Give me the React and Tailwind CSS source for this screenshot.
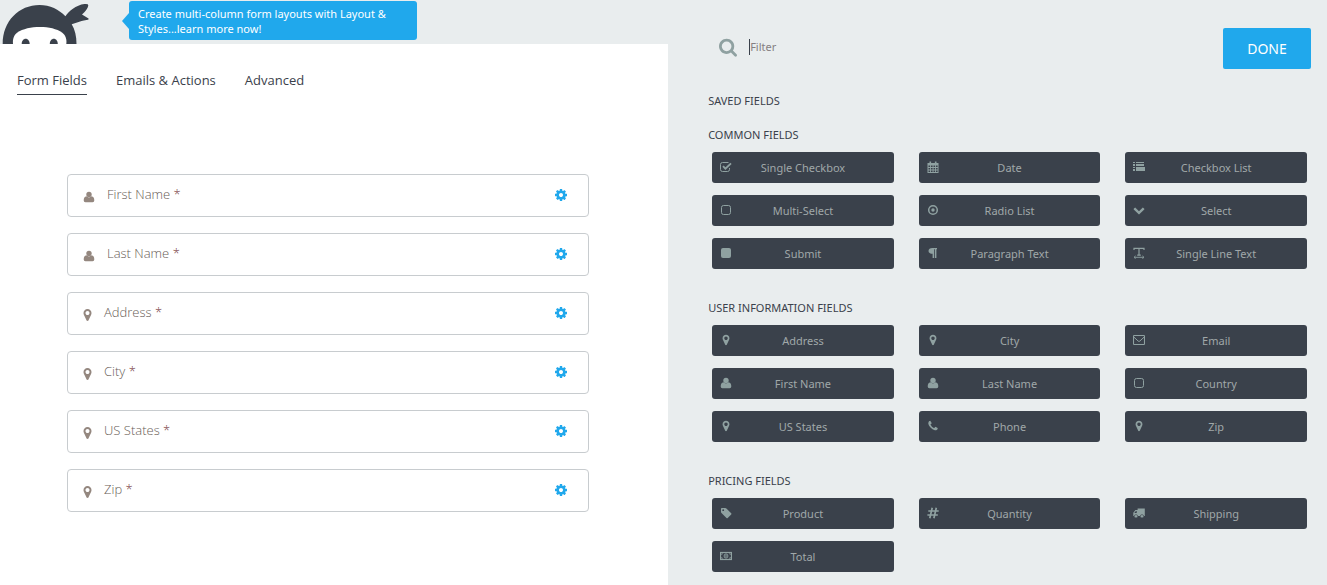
import React from "react";

// Glyphs drawn on a 1792-unit em square, baseline at y = 0, y axis pointing up.
const GLYPHS = {
  marker: { w: 1024, d: "M768 896q0 106 -75 181t-181 75t-181 -75t-75 -181t75 -181t181 -75t181 75t75 181zM1024 896q0 -109 -33 -179l-364 -774q-16 -33 -47.5 -52t-67.5 -19t-67.5 19t-46.5 52l-365 774q-33 70 -33 179q0 212 150 362t362 150t362 -150t150 -362z" },
  cog: { w: 1536, d: "M1024 640q0 106 -75 181t-181 75t-181 -75t-75 -181t75 -181t181 -75t181 75t75 181zM1536 749v-222q0 -12 -8 -23t-20 -13l-185 -28q-19 -54 -39 -91q35 -50 107 -138q10 -12 10 -25t-9 -23q-27 -37 -99 -108t-94 -71q-12 0 -26 9l-138 108q-44 -23 -91 -38q-16 -136 -29 -186q-7 -28 -36 -28h-222q-14 0 -24.5 8.5t-11.5 21.5l-28 184q-49 16 -90 37l-141 -107q-10 -9 -25 -9q-14 0 -25 11q-126 114 -165 168q-7 10 -7 23q0 12 8 23q15 21 51 66.5t54 70.5q-27 50 -41 99l-183 27q-13 2 -21 12.5t-8 23.5v222q0 12 8 23t19 13l186 28q14 46 39 92q-40 57 -107 138q-10 12 -10 24q0 10 9 23q26 36 98.5 107.5t94.5 71.5q13 0 26 -10l138 -107q44 23 91 38q16 136 29 186q7 28 36 28h222q14 0 24.5 -8.5t11.5 -21.5l28 -184q49 -16 90 -37l142 107q9 9 24 9q13 0 25 -10q129 -119 165 -170q7 -8 7 -22q0 -12 -8 -23q-15 -21 -51 -66.5t-54 -70.5q26 -50 41 -98l183 -28q13 -2 21 -12.5t8 -23.5z" },
  search: { w: 1664, d: "M1152 704q0 185 -131.5 316.5t-316.5 131.5t-316.5 -131.5t-131.5 -316.5t131.5 -316.5t316.5 -131.5t316.5 131.5t131.5 316.5zM1664 -128q0 -52 -38 -90t-90 -38q-54 0 -90 38l-343 342q-179 -124 -399 -124q-143 0 -273.5 55.5t-225 150t-150 225t-55.5 273.5t55.5 273.5t150 225t225 150t273.5 55.5t273.5 -55.5t225 -150t150 -225t55.5 -273.5q0 -220 -124 -399l343 -343q37 -37 37 -90z" },
  chevron: { w: 1792, d: "M1683 728l-742 -741q-19 -19 -45 -19t-45 19l-742 741q-19 19 -19 45.5t19 45.5l166 165q19 19 45 19t45 -19l531 -531l531 531q19 19 45 19t45 -19l166 -165q19 -19 19 -45.5t-19 -45.5z" },
  phone: { w: 1408, d: "M1408 296q0 -27 -10 -70.5t-21 -68.5q-21 -50 -122 -106q-94 -51 -186 -51q-27 0 -53 3.5t-57.5 12.5t-47 14.5t-55.5 20.5t-49 18q-98 35 -175 83q-127 79 -264 216t-216 264q-48 77 -83 175q-3 9 -18 49t-20.5 55.5t-14.5 47t-12.5 57.5t-3.5 53q0 92 51 186q56 101 106 122q25 11 68.5 21t70.5 10q14 0 21 -3q18 -6 53 -76q11 -19 30 -54t35 -63.5t31 -53.5q3 -4 17.5 -25t21.5 -35.5t7 -28.5q0 -20 -28.5 -50t-62 -55t-62 -53t-28.5 -46q0 -9 5 -22.5t8.5 -20.5t14 -24t11.5 -19q76 -137 174 -235t235 -174q2 -1 19 -11.5t24 -14t20.5 -8.5t22.5 -5q18 0 46 28.5t53 62t55 62t50 28.5q14 0 28.5 -7t35.5 -21.5t25 -17.5q25 -15 53.5 -31t63.5 -35t54 -30q70 -35 76 -53q3 -7 3 -21z" },
};

// Small icons drawn on a 12 x 12 grid.
const SHAPES = {
  user: (
    <g fill="currentColor">
      <circle cx="6" cy="3.500" r="2.700" />
      <path d="M3.400 5.300q2.600 2.200 5.200 0 2.700.4 2.700 4.200 0 1.800-1.700 1.800H2.400Q.7 11.300.7 9.500q0-3.800 2.700-4.200z" />
    </g>
  ),
  checkSquare: (
    <g fill="none" stroke="currentColor">
      <path d="M9.500 7v1.500a2 2 0 0 1-2 2h-5a2 2 0 0 1-2-2v-5a2 2 0 0 1 2-2h6" />
      <path d="M3 5.200l2.400 2.400L11 2.400" strokeWidth="1.900" />
    </g>
  ),
  squareOutline: <rect x="1.500" y="1.500" width="9" height="9" rx="2" fill="none" stroke="currentColor" />,
  square: <rect x="1" y="1" width="10" height="10" rx="2" fill="currentColor" />,
  calendar: (
    <path
      fill="currentColor"
      fillRule="evenodd"
      d="M.5 2h2V.5h1.600V2h3.800V.5h1.600V2h2v10H.5zM1.500 4.600v1.500h1.600V4.600zM4 4.600v1.500h1.600V4.600zM6.500 4.600v1.500h1.600V4.600zM9 4.600v1.500h1.600V4.600zM1.500 7v1.500h1.600V7zM4 7v1.500h1.600V7zM6.500 7v1.500h1.600V7zM9 7v1.500h1.600V7zM1.500 9.500V11h1.600V9.500zM4 9.500V11h1.600V9.500zM6.500 9.500V11h1.600V9.500zM9 9.500V11h1.600V9.500z"
    />
  ),
  list: (
    <g fill="currentColor" shapeRendering="crispEdges">
      <path d="M0 1h2v1H0zM0 3h2v2H0zM0 6h2v1H0zM0 8h2v2H0z" />
      <path d="M3 1h8v1H3zM3 3h8v2H3zM3 6h9v4H3z" />
    </g>
  ),
  radio: (
    <g>
      <circle cx="6" cy="6" r="4.300" fill="none" stroke="currentColor" strokeWidth="1.500" />
      <circle cx="6" cy="6" r="1.700" fill="currentColor" />
    </g>
  ),
  paragraph: <path fill="currentColor" d="M10 1v1.200H9.400V11H8V2.200H7.200V11H5.600V6.800C3.200 6.800 1.500 5.600 1.500 3.900 1.500 2 3.100 1 5.200 1z" />,
  textWidth: (
    <g fill="none" stroke="currentColor">
      <path d="M1 3V1.300h10V3M6 1.300v7M4.200 8.200h3.600" strokeWidth="1.200" />
      <path d="M1.500 10.300h9M2.600 8.900L1 10.300l1.600 1.400M9.400 8.900l1.600 1.400-1.600 1.400" strokeWidth=".9" />
    </g>
  ),
  envelope: (
    <g fill="none" stroke="currentColor">
      <rect x=".5" y="1.500" width="11" height="9" rx=".7" strokeWidth="1.100" />
      <path d="M1 3.200l4.200 3.900q.8.700 1.600 0L11 3.200" />
    </g>
  ),
  tag: <path fill="currentColor" fillRule="evenodd" d="M1.800 1h3.400q.7 0 1.200.5l4.800 4.800q.6.600 0 1.200L7.700 11q-.6.600-1.200 0L1.500 6.100Q1 5.600 1 5V1.800Q1 1 1.800 1zM3.200 2.300a.9.900 0 1 0 0 1.800a.9.900 0 0 0 0-1.800z" />,
  hash: <path fill="none" stroke="currentColor" strokeWidth="1.700" d="M5.200.8L2.800 11.200M9.300.8L6.900 11.200M1.300 4h10.400M.4 8h10.400" />,
  truck: (
    <g fill="currentColor">
      <path fillRule="evenodd" d="M4.600 1.500h7.200v7.400H.3V5.700L2.400 3h2.200zM2.900 4L1.300 6h2.400V4z" />
      <circle cx="3" cy="9.300" r="1.700" stroke="#3a414b" strokeWidth=".6" />
      <circle cx="9" cy="9.300" r="1.700" stroke="#3a414b" strokeWidth=".6" />
    </g>
  ),
  money: (
    <g fill="none" stroke="currentColor">
      <rect x=".5" y="2.500" width="11" height="7" strokeWidth="1.200" />
      <path d="M1 4.300h1.200V3M11 4.300H9.800V3M1 7.700h1.200V9M11 7.700H9.800V9" strokeWidth=".7" />
      <ellipse cx="6" cy="6" rx="1.900" ry="2.100" strokeWidth=".9" />
      <path d="M6 4.700v2.600" />
    </g>
  ),
};

function Icon({ name, className }) {
  const glyph = GLYPHS[name];
  if (glyph) {
    return (
      <svg viewBox={`0 -1536 ${glyph.w} 1792`} className={className} aria-hidden="true">
        <path d={glyph.d} transform="scale(1 -1)" fill="currentColor" />
      </svg>
    );
  }
  return (
    <svg viewBox="0 0 12 12" className={className} aria-hidden="true">
      {SHAPES[name]}
    </svg>
  );
}

function Logo() {
  return (
    <svg viewBox="0 0 90 44" className="h-11 w-[90px] shrink-0" role="img" aria-label="Ninja">
      <path
        fill="#3a414b"
        d="M2.700 44C2.700 21 19 5 39.500 5 50 5 59 9.500 65.400 16.300 68.500 11.500 76 5 84.500 4q4-.4 3.800 1.400-.5 3.600-6.300 9.200l6.500 3.800q.8 1-.6 1.400-4.600.5-16.200 4.400C75 29.500 76.500 36 76.500 44z"
      />
      <path fill="#fff" d="M13 44c-.6-5 1-9 4-11.300 6-4 14-5.700 23-5.700s16.500 1.700 22.300 5.700C65.400 35 67 39 66.300 44z" />
      <path fill="#3a414b" d="M21.700 44c0-3 1.800-5.200 4-5.200s4 2.200 4 5.200zM49.800 44c0-3 1.800-5.200 4-5.200s4 2.200 4 5.200z" />
    </svg>
  );
}

const TABS = ["Form Fields", "Emails & Actions", "Advanced"];

const FORM_FIELDS = [
  ["user", "First Name"],
  ["user", "Last Name"],
  ["marker", "Address"],
  ["marker", "City"],
  ["marker", "US States"],
  ["marker", "Zip"],
];

const SECTIONS = [
  {
    title: "COMMON FIELDS",
    fields: [
      ["checkSquare", "Single Checkbox"],
      ["calendar", "Date"],
      ["list", "Checkbox List"],
      ["squareOutline", "Multi-Select"],
      ["radio", "Radio List"],
      ["chevron", "Select"],
      ["square", "Submit"],
      ["paragraph", "Paragraph Text"],
      ["textWidth", "Single Line Text"],
    ],
  },
  {
    title: "USER INFORMATION FIELDS",
    fields: [
      ["marker", "Address"],
      ["marker", "City"],
      ["envelope", "Email"],
      ["user", "First Name"],
      ["user", "Last Name"],
      ["squareOutline", "Country"],
      ["marker", "US States"],
      ["phone", "Phone"],
      ["marker", "Zip"],
    ],
  },
  {
    title: "PRICING FIELDS",
    fields: [
      ["tag", "Product"],
      ["hash", "Quantity"],
      ["truck", "Shipping"],
      ["money", "Total"],
    ],
  },
];

function FormField({ icon, label }) {
  return (
    <li className="flex h-[43px] items-center gap-3 rounded-[4px] border border-[#c8cccf] pb-[2px] pl-[15px] pr-[21px]">
      <Icon
        name={icon}
        className={icon === "user" ? "mt-1 h-3 w-3 text-[#94877f]" : "mt-1 h-[14px] w-[9px] text-[#94877f]"}
      />
      <span className="flex-1 pb-[2px] font-['Open_Sans',sans-serif] text-[13px] font-light leading-5 text-[#685c56]">
        {label} <span className="text-[#7a3f47]">*</span>
      </span>
      <button type="button" aria-label={`${label} settings`} className="text-[#20a8ec]">
        <Icon name="cog" className="h-[14px] w-3" />
      </button>
    </li>
  );
}

function FieldButton({ icon, label }) {
  return (
    <button
      type="button"
      className="flex h-[31px] items-center rounded-[3px] bg-[#3a414b] pl-2 pr-5 text-[11px] leading-4 text-[#a0a8a9]"
    >
      <Icon name={icon} className="mb-[2px] h-3 w-3 shrink-0 text-[#8fa1a1]" />
      <span className="flex-1 text-center">{label}</span>
    </button>
  );
}

export default function App() {
  return (
    <div className="flex min-h-screen bg-[#e9edee] font-['Noto_Sans',sans-serif] text-[#3a414b]">
      <main className="flex w-[50.35%] flex-col">
        <header className="flex h-11 items-start">
          <Logo />
          <a href="#layout-styles" className="ml-8 mt-px flex items-start text-white">
            <svg viewBox="0 0 7 16" className="mt-3 h-4 w-[7px]" aria-hidden="true">
              <path d="M7 0v16L0 8z" fill="#20a8ec" />
            </svg>
            <span className="w-72 rounded-[3px] bg-[#20a8ec] pb-1 pl-[9px] pr-4 pt-[5px] text-[11px] leading-[15px]">
              Create multi-column form layouts with Layout &amp; Styles...learn more now!
            </span>
          </a>
        </header>
        <div className="flex-1 bg-white">
          <nav className="flex gap-[29px] pl-[17px] pt-[26px] font-['Open_Sans',sans-serif] text-[13px] leading-5">
            {TABS.map((tab, i) => (
              <a
                key={tab}
                href={`#tab-${i}`}
                className={i === 0 ? "border-b border-[#3a414b] pb-1" : "border-b border-transparent pb-1"}
              >
                {tab}
              </a>
            ))}
          </nav>
          <ul className="mt-[79px] flex flex-col gap-4 pl-[67px] pr-[79px]">
            {FORM_FIELDS.map(([icon, label]) => (
              <FormField key={label} icon={icon} label={label} />
            ))}
          </ul>
        </div>
      </main>

      <aside className="flex-1 pl-10">
        <div className="flex items-start justify-between pr-4 pt-7">
          <label className="flex items-center pl-[11px] pt-[9px]">
            <Icon name="search" className="h-5 w-[18px] text-[#8fa1a1]" />
            <input
              type="text"
              aria-label="Filter"
              placeholder="Filter"
              className="ml-3 h-4 w-72 border-l border-[#3a414b] bg-transparent text-[11px] leading-4 outline-none placeholder:text-[#857f82]"
            />
          </label>
          <button type="button" className="h-[41px] w-[88px] rounded-[2px] bg-[#20a8ec] text-[14px] leading-5 text-white">
            DONE
          </button>
        </div>
        <h2 className="mt-6 text-[11px] leading-4">SAVED FIELDS</h2>
        <div className="mt-[18px] flex flex-col gap-[31px]">
          {SECTIONS.map((section) => (
            <section key={section.title}>
              <h2 className="text-[11px] leading-4">{section.title}</h2>
              <div className="mt-[9px] grid grid-cols-3 gap-x-[25px] gap-y-3 pl-1 pr-5">
                {section.fields.map(([icon, label]) => (
                  <FieldButton key={label} icon={icon} label={label} />
                ))}
              </div>
            </section>
          ))}
        </div>
      </aside>
    </div>
  );
}
